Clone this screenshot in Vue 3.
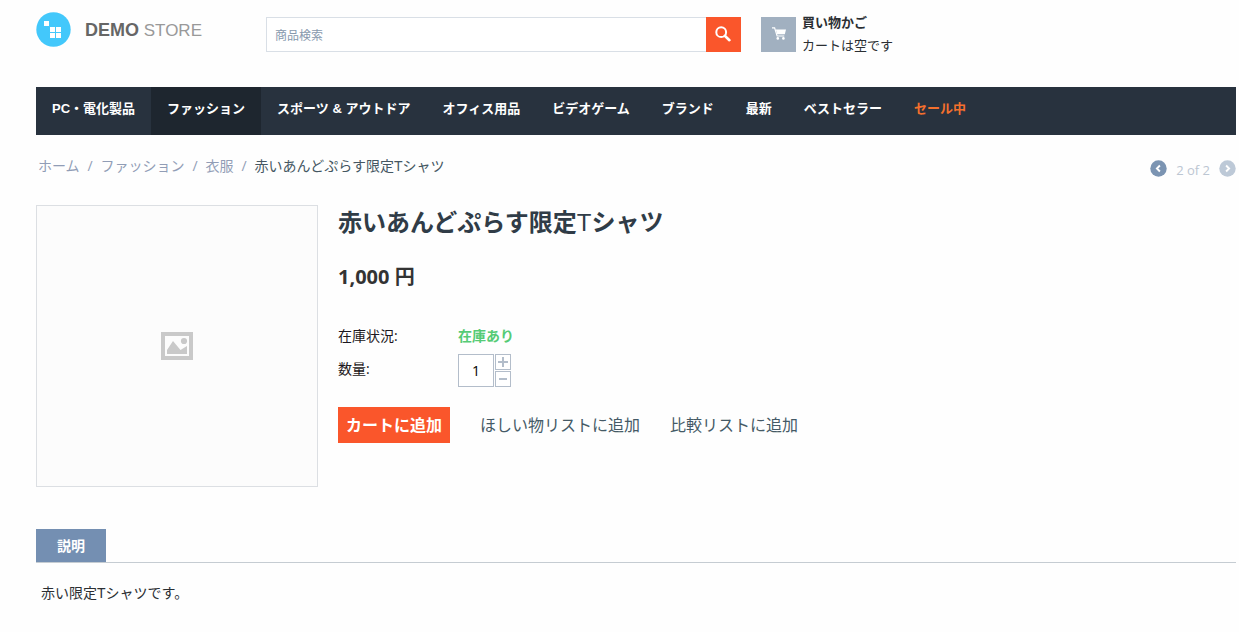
<script setup>
import { ref } from 'vue'

const quantity = ref('1')
const query = ref('')
const menu = [
  { label: 'PC・電化製品' },
  { label: 'ファッション', active: true },
  { label: 'スポーツ & アウトドア' },
  { label: 'オフィス用品' },
  { label: 'ビデオゲーム' },
  { label: 'ブランド' },
  { label: '最新' },
  { label: 'ベストセラー' },
  { label: 'セール中', sale: true }
]
const trail = ['ホーム', 'ファッション', '衣服']

function step(n) {
  quantity.value = String(Math.max(1, (parseInt(quantity.value) || 1) + n))
}
</script>

<template>
  <div class="page">
    <header class="header">
      <a class="logo" href="#">
        <svg width="35" height="35" viewBox="0 0 35 35" aria-hidden="true">
          <circle cx="17.5" cy="17.5" r="17.2" fill="#43c8fb" />
          <path fill="#fff" d="M8 9h5v5H8zM14 15h5v5h-5zM20 15h5v5h-5zM14 21h5v5h-5zM20 21h5v5h-5z" />
        </svg>
        <span class="brand"><b>DEMO</b> STORE</span>
      </a>
      <form class="search" @submit.prevent>
        <input v-model="query" type="text" placeholder="商品検索" aria-label="商品検索" />
        <button type="submit" aria-label="検索">
          <svg width="16" height="16" viewBox="0 0 16 16" fill="none" stroke="#fff">
            <circle cx="6.2" cy="6.2" r="4.9" stroke-width="2" />
            <path d="M9.8 9.8l4.6 4.4" stroke-width="2.6" stroke-linecap="round" />
          </svg>
        </button>
      </form>
      <a class="cart" href="#">
        <span class="cart-icon">
          <svg width="14" height="13" viewBox="0 0 14 13" aria-hidden="true">
            <path d="M0 .8h2.6l2.5 8.2h7.2" fill="none" stroke="#fff" stroke-width="1.2" />
            <path d="M3.8 2.4H14l-1.2 4.8H5.2z" fill="#fff" />
            <circle cx="5.8" cy="11.4" r="1.3" fill="#fff" />
            <circle cx="11.4" cy="11.4" r="1.3" fill="#fff" />
          </svg>
        </span>
        <span class="cart-text"><b>買い物かご</b><span>カートは空です</span></span>
      </a>
    </header>

    <nav class="menu">
      <a v-for="m in menu" :key="m.label" href="#" :class="{ active: m.active, sale: m.sale }">{{ m.label }}</a>
    </nav>

    <div class="trail-row">
      <nav class="trail">
        <template v-for="t in trail" :key="t">
          <a href="#">{{ t }}</a><span class="slash">/</span>
        </template>
        <span class="current">赤いあんどぷらす限定<span class="latin">T</span>シャツ</span>
      </nav>
      <div class="pager">
        <a href="#" aria-label="前へ">
          <svg width="17" height="17" viewBox="0 0 17 17">
            <circle cx="8.5" cy="8.5" r="8.2" fill="#7b94b2" />
            <path d="M9.9 5.5l-3 3 3 3" fill="none" stroke="#fff" stroke-width="1.9" />
          </svg>
        </a>
        <span>2 of 2</span>
        <a href="#" aria-label="次へ">
          <svg width="17" height="17" viewBox="0 0 17 17">
            <circle cx="8.5" cy="8.5" r="8.2" fill="#bdc9d7" />
            <path d="M7.1 5.5l3 3-3 3" fill="none" stroke="#fff" stroke-width="1.9" />
          </svg>
        </a>
      </div>
    </div>

    <main class="product">
      <div class="photo">
        <svg width="32" height="28" viewBox="0 0 32 28" aria-hidden="true">
          <path fill="#c9c9c9" fill-rule="evenodd" d="M0 0h32v28H0zM4 4v20h24V4z" />
          <path fill="#c9c9c9" d="M6 22v-4l6-9 7.500 9L26 14v8z" />
          <circle cx="23" cy="9" r="3.100" fill="#c9c9c9" />
        </svg>
      </div>
      <div class="info">
        <h1>赤いあんどぷらす限定<span class="latin">T</span>シャツ</h1>
        <p class="price">1,000 円</p>
        <div class="field">
          <span class="name">在庫状況:</span>
          <span class="stock">在庫あり</span>
        </div>
        <div class="field amount">
          <label class="name" for="qty">数量:</label>
          <div class="stepper">
            <input id="qty" v-model="quantity" type="text" />
            <div class="steps">
              <button type="button" aria-label="増やす" @click="step(1)">
                <svg width="10" height="10" viewBox="0 0 10 10"><path d="M5 0v10M0 5h10" stroke="#b3bdca" stroke-width="2" /></svg>
              </button>
              <button type="button" aria-label="減らす" @click="step(-1)">
                <svg width="10" height="10" viewBox="0 0 10 10"><path d="M1 5h8" stroke="#b3bdca" stroke-width="2" /></svg>
              </button>
            </div>
          </div>
        </div>
        <div class="actions">
          <button class="add" type="button">カートに追加</button>
          <a href="#">ほしい物リストに追加</a>
          <a href="#">比較リストに追加</a>
        </div>
      </div>
    </main>

    <section>
      <div class="tabs" role="tablist">
        <button type="button" role="tab" aria-selected="true">説明</button>
      </div>
      <p class="description">赤い限定<span class="latin">T</span>シャツです。</p>
    </section>
  </div>
</template>

<style>
body {
  background: #fefefe;
}
</style>

<style scoped>
.page {
  padding: 12px 3px 16px 36px;
  font-family: "Open Sans", "Noto Sans CJK JP", sans-serif;
  font-size: 13px;
  line-height: 22px;
  color: #2b2f33;
}
.page *,
.page {
  box-sizing: border-box;
}
a {
  color: inherit;
  text-decoration: none;
}
svg {
  display: block;
}
button,
input {
  margin: 0;
  padding: 0;
  border: 0;
  border-radius: 0;
  font: inherit;
}
button {
  display: flex;
  align-items: center;
  justify-content: center;
  cursor: pointer;
}
.latin {
  font-family: "Liberation Sans", sans-serif;
  font-weight: 400;
}
.header {
  display: flex;
  align-items: flex-start;
  height: 75px;
}
.logo {
  display: flex;
  align-items: center;
  gap: 14px;
  width: 230px;
}
.brand {
  font-family: "Liberation Sans", sans-serif;
  font-size: 17px;
  line-height: 24px;
  padding-top: 2px;
  color: #999;
}
.brand b {
  font-size: 18px;
  color: #666;
}
.search {
  display: flex;
  width: 475px;
  height: 35px;
  margin-top: 5px;
}
.search input {
  flex: 1;
  min-width: 0;
  padding: 2px 8px 0;
  border: 1px solid #d9dfe6;
  border-right: 0;
  background: #fff;
  font-size: 12px;
  color: #2b2f33;
}
.search input::placeholder {
  color: #8799ad;
  opacity: 1;
}
.search button {
  width: 35px;
  padding: 0 2px 2px 0;
  background: #fa562b;
}
.cart {
  display: flex;
  gap: 6px;
  margin: 5px 0 0 20px;
}
.cart-icon {
  display: flex;
  align-items: center;
  justify-content: center;
  width: 35px;
  height: 35px;
  padding-bottom: 3px;
  background: #a1b0c0;
}
.cart-text {
  display: flex;
  flex-direction: column;
  margin-top: -6px;
  line-height: 23px;
}
.menu {
  display: flex;
  height: 48px;
  background: #28323e;
  color: #fff;
  font-family: "Liberation Sans", "Noto Sans CJK JP", sans-serif;
  font-weight: 700;
  line-height: 44px;
  white-space: nowrap;
}
.menu a {
  padding: 0 16px;
}
.menu .active {
  background: #1e262f;
}
.menu .sale {
  color: #f4702d;
}
.trail-row {
  display: flex;
  justify-content: space-between;
  padding: 20px 0 0 2px;
  font-size: 14px;
  color: #919db6;
}
.slash {
  display: inline-block;
  width: 21px;
  text-align: center;
}
.trail {
  display: flex;
}
.current {
  color: #455762;
}
.pager {
  display: flex;
  gap: 9px;
  padding-top: 5px;
  font-size: 13px;
  line-height: 20px;
  color: #bcc6d2;
}
.product {
  display: flex;
  gap: 20px;
  margin-top: 25px;
}
.photo {
  display: flex;
  flex: none;
  align-items: center;
  justify-content: center;
  width: 282px;
  height: 282px;
  border: 1px solid #dcdfe3;
  background: #fcfcfc;
}
.info {
  flex: 1;
}
h1 {
  margin: 0;
  font-size: 24px;
  line-height: 34px;
  color: #303c47;
}
.price {
  margin: 27px 0 38px;
  font-size: 20px;
  font-weight: 700;
  line-height: 20px;
  color: #333;
}
.field {
  display: flex;
  color: #1c1720;
}
.name {
  width: 120px;
  font-size: 14px;
}
.stock {
  font-size: 14px;
  font-weight: 700;
  color: #55cb75;
}
.amount {
  margin-top: 7px;
}
.amount .name {
  line-height: 30px;
}
.stepper {
  display: flex;
  gap: 1px;
}
.stepper input {
  width: 36px;
  height: 33px;
  border: 1px solid #b3bdca;
  background: #fff;
  text-align: center;
  font-size: 14px;
  color: #000;
}
.steps {
  display: flex;
  flex-direction: column;
  gap: 1px;
}
.steps button {
  width: 16px;
  height: 16px;
  border: 1px solid #b3bdca;
  background: #fff;
}
.actions {
  display: flex;
  gap: 30px;
  margin-top: 20px;
  font-size: 16px;
  line-height: 36px;
  color: #455a66;
}
.add {
  height: 36px;
  padding: 0 8px;
  background: #fa562b;
  color: #fff;
  font-weight: 600;
}
.tabs {
  display: flex;
  margin-top: 42px;
  border-bottom: 1px solid #c5ccd2;
}
.tabs button {
  width: 70px;
  height: 33px;
  background: #748fb2;
  color: #fff;
  font-size: 14px;
  font-weight: 700;
}
.description {
  margin: 19px 5px 0;
  font-size: 14px;
}
</style>
